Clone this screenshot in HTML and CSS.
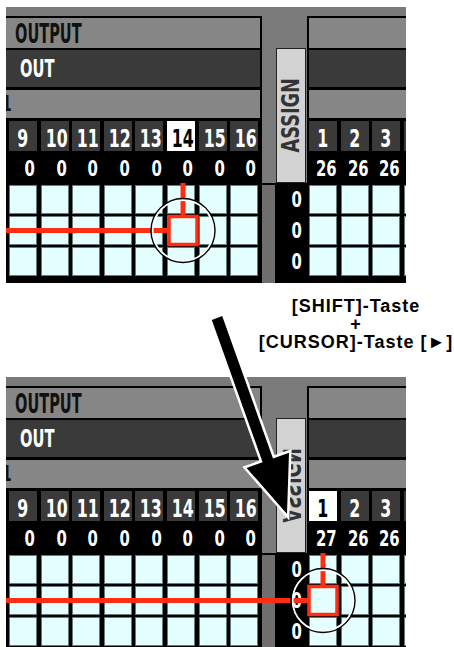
FILE: index.html
```html
<!DOCTYPE html>
<html lang="de">
<head>
    <meta charset="UTF-8">
    <title>Assign Cursor</title>
    <link rel="stylesheet" href="styles.css">
</head>
<body>
<div class="page">

    <!-- before: cursor on OUTPUT 14 -->
    <div class="screen">
        <div class="panel left">
            <div class="band band-title"><span class="title">OUTPUT</span></div>
            <div class="band band-name"><span class="name">OUT</span></div>
            <div class="band band-sub"><span class="cut">1</span></div>
            <div class="keys">
                <span class="key"><span class="n">9</span></span><span class="key"><span class="n">10</span></span>
                <span class="key"><span class="n">11</span></span><span class="key"><span class="n">12</span></span>
                <span class="key"><span class="n">13</span></span><span class="key sel"><span class="n">14</span></span>
                <span class="key"><span class="n">15</span></span><span class="key"><span class="n">16</span></span>
            </div>
            <div class="values">
                <span><span class="n">0</span></span><span><span class="n">0</span></span><span><span class="n">0</span></span><span><span class="n">0</span></span>
                <span><span class="n">0</span></span><span><span class="n">0</span></span><span><span class="n">0</span></span><span><span class="n">0</span></span>
            </div>
            <div class="matrix">
                <div class="row"><span class="cell"></span><span class="cell"></span><span class="cell"></span><span class="cell"></span><span class="cell"></span><span class="cell"></span><span class="cell"></span><span class="cell"></span></div>
                <div class="row"><span class="cell"></span><span class="cell"></span><span class="cell"></span><span class="cell"></span><span class="cell"></span><span class="cell"></span><span class="cell"></span><span class="cell"></span></div>
                <div class="row"><span class="cell"></span><span class="cell"></span><span class="cell"></span><span class="cell"></span><span class="cell"></span><span class="cell"></span><span class="cell"></span><span class="cell"></span></div>
            </div>
        </div>
        <div class="mid">
            <div class="assign"><span class="assign-text">ASSIGN</span></div>
            <div class="mid-low">
                <div class="strip"></div>
                <div class="sums"><span><span class="n">0</span></span><span><span class="n">0</span></span><span><span class="n">0</span></span></div>
            </div>
        </div>
        <div class="panel right">
            <div class="band band-title"></div>
            <div class="band band-name"></div>
            <div class="band band-sub"></div>
            <div class="keys">
                <span class="key"><span class="n">1</span></span><span class="key"><span class="n">2</span></span>
                <span class="key"><span class="n">3</span></span><span class="key"><span class="n">4</span></span>
            </div>
            <div class="values">
                <span><span class="n">26</span></span><span><span class="n">26</span></span><span><span class="n">26</span></span><span><span class="n">26</span></span>
            </div>
            <div class="matrix">
                <div class="row"><span class="cell"></span><span class="cell"></span><span class="cell"></span><span class="cell"></span></div>
                <div class="row"><span class="cell"></span><span class="cell"></span><span class="cell"></span><span class="cell"></span></div>
                <div class="row"><span class="cell"></span><span class="cell"></span><span class="cell"></span><span class="cell"></span></div>
            </div>
        </div>
        <svg class="cursor" viewBox="0 0 400 276">
            <rect x="0" y="221" width="163" height="5" fill="#ff2e12"/>
            <rect x="174.5" y="176" width="5" height="34" fill="#ff2e12"/>
            <rect x="163" y="209.5" width="28" height="28" fill="#e3ffff" stroke="#ff2e12" stroke-width="3.5"/>
            <circle cx="177" cy="223.5" r="30.5" fill="none" stroke="#fff" stroke-width="2"/>
            <circle cx="177" cy="223.5" r="32" fill="none" stroke="#000" stroke-width="1.4"/>
        </svg>
    </div>

    <div class="hint">
        <div>[SHIFT]-Taste</div>
        <div>+</div>
        <div>[CURSOR]-Taste [►]</div>
    </div>

    <!-- after: cursor jumps to ASSIGN 1 -->
    <div class="screen">
        <div class="panel left">
            <div class="band band-title"><span class="title">OUTPUT</span></div>
            <div class="band band-name"><span class="name">OUT</span></div>
            <div class="band band-sub"><span class="cut">1</span></div>
            <div class="keys">
                <span class="key"><span class="n">9</span></span><span class="key"><span class="n">10</span></span>
                <span class="key"><span class="n">11</span></span><span class="key"><span class="n">12</span></span>
                <span class="key"><span class="n">13</span></span><span class="key"><span class="n">14</span></span>
                <span class="key"><span class="n">15</span></span><span class="key"><span class="n">16</span></span>
            </div>
            <div class="values">
                <span><span class="n">0</span></span><span><span class="n">0</span></span><span><span class="n">0</span></span><span><span class="n">0</span></span>
                <span><span class="n">0</span></span><span><span class="n">0</span></span><span><span class="n">0</span></span><span><span class="n">0</span></span>
            </div>
            <div class="matrix">
                <div class="row"><span class="cell"></span><span class="cell"></span><span class="cell"></span><span class="cell"></span><span class="cell"></span><span class="cell"></span><span class="cell"></span><span class="cell"></span></div>
                <div class="row"><span class="cell"></span><span class="cell"></span><span class="cell"></span><span class="cell"></span><span class="cell"></span><span class="cell"></span><span class="cell"></span><span class="cell"></span></div>
                <div class="row"><span class="cell"></span><span class="cell"></span><span class="cell"></span><span class="cell"></span><span class="cell"></span><span class="cell"></span><span class="cell"></span><span class="cell"></span></div>
            </div>
        </div>
        <div class="mid">
            <div class="assign"><span class="assign-text flip">ASSIGN</span></div>
            <div class="mid-low">
                <div class="strip"></div>
                <div class="sums"><span><span class="n">0</span></span><span><span class="n">0</span></span><span><span class="n">0</span></span></div>
            </div>
        </div>
        <div class="panel right">
            <div class="band band-title"></div>
            <div class="band band-name"></div>
            <div class="band band-sub"></div>
            <div class="keys">
                <span class="key sel"><span class="n">1</span></span><span class="key"><span class="n">2</span></span>
                <span class="key"><span class="n">3</span></span><span class="key"><span class="n">4</span></span>
            </div>
            <div class="values">
                <span><span class="n">27</span></span><span><span class="n">26</span></span><span><span class="n">26</span></span><span><span class="n">26</span></span>
            </div>
            <div class="matrix">
                <div class="row"><span class="cell"></span><span class="cell"></span><span class="cell"></span><span class="cell"></span></div>
                <div class="row"><span class="cell"></span><span class="cell"></span><span class="cell"></span><span class="cell"></span></div>
                <div class="row"><span class="cell"></span><span class="cell"></span><span class="cell"></span><span class="cell"></span></div>
            </div>
        </div>
        <svg class="cursor" viewBox="0 0 400 276">
            <rect x="0" y="221" width="303" height="5" fill="#ff2e12"/>
            <rect x="314.5" y="176" width="5" height="34" fill="#ff2e12"/>
            <rect x="303" y="209.5" width="28" height="28" fill="#e3ffff" stroke="#ff2e12" stroke-width="3.5"/>
            <circle cx="317" cy="223.5" r="30.5" fill="none" stroke="#fff" stroke-width="2"/>
            <circle cx="317" cy="223.5" r="32" fill="none" stroke="#000" stroke-width="1.4"/>
        </svg>
    </div>

    <svg class="arrow" viewBox="0 0 454 647">
        <polygon points="211.8,319.9 222.2,316.1 273,458.4 289,452.7 287,514 246.6,467.9 262.6,462.2"
                 fill="#000" stroke="#fff" stroke-width="5" paint-order="stroke"/>
    </svg>
</div>
</body>
</html>
```

FILE: styles.css
```css
body {
    margin: 0;
    background-color: #fff;
    font-family: "Liberation Sans", Arial, sans-serif;
}

.page {
    position: relative;
    width: 454px;
    height: 647px;
    padding-top: 7px;
    box-sizing: border-box;
    overflow: hidden;
}

.screen {
    position: relative;
    display: flex;
    width: 400px;
    height: 276px;
    margin-left: 6px;
    padding-top: 9px;
    box-sizing: border-box;
    background-color: #7a7a7a;
    overflow: hidden;
    font-family: "DejaVu Sans Condensed", "DejaVu Sans", sans-serif;
    font-weight: bold;
}

.panel {
    flex: none;
    height: 267px;
    box-sizing: border-box;
    border-top: 2px solid #000;
    background-color: #000;
    overflow: hidden;
}

.left {
    width: 256px;
    border-right: 2px solid #000;
}

.right {
    width: 99px;
    border-left: 2px solid #000;
}

.band {
    background-color: #868686;
}

.band-title {
    height: 30px;
    border-bottom: 2px solid #000;
}

.band-name {
    height: 37px;
    border-bottom: 3px solid #000;
    background-color: #3a3a3a;
}

.band-sub {
    height: 28px;
}

.title {
    display: inline-block;
    margin-left: 9px;
    font-size: 27px;
    line-height: 31px;
    color: #111;
    transform: scaleX(0.6);
    transform-origin: left;
}

.name {
    display: inline-block;
    margin-left: 14px;
    font-size: 24px;
    line-height: 38px;
    color: #fff;
    transform: scaleX(0.68);
    transform-origin: left;
}

.cut {
    display: inline-block;
    margin-left: -6px;
    font-size: 22px;
    line-height: 28px;
    color: #111;
    transform: scaleX(0.7);
}

.keys {
    display: flex;
    gap: 3.6px;
    height: 33px;
    padding: 3px 0 0 3px;
    box-sizing: border-box;
}

.right .keys,
.right .values,
.right .matrix {
    padding-left: 0;
}

.key {
    flex: none;
    width: 28px;
    height: 30px;
    background-color: #3a3a3a;
    color: #fff;
    font-size: 25px;
    line-height: 35px;
    text-align: center;
    white-space: nowrap;
}

.key .n {
    display: inline-block;
    transform: scaleX(0.7);
}

.key.sel {
    background-color: #fff;
    color: #000;
}

.values {
    display: flex;
    gap: 3.6px;
    height: 32px;
    padding-left: 3px;
}

.values > span {
    flex: none;
    width: 28px;
    padding-right: 2px;
    box-sizing: border-box;
    font-size: 22px;
    line-height: 35px;
    text-align: right;
    white-space: nowrap;
    color: #fff;
}

.values .n,
.sums .n {
    display: inline-block;
    transform: scaleX(0.75);
    transform-origin: right;
}

.matrix {
    display: flex;
    flex-direction: column;
    gap: 2px;
    padding: 2px 0 0 3px;
}

.row {
    display: flex;
    gap: 3.6px;
}

.cell {
    flex: none;
    width: 28px;
    height: 29px;
    box-sizing: border-box;
    border: 1px solid #667a7a;
    background-color: #e3ffff;
}

.mid {
    flex: none;
    display: flex;
    flex-direction: column;
    width: 45px;
    padding-top: 32px;
}

.assign {
    display: flex;
    align-items: center;
    justify-content: center;
    width: 30px;
    height: 135px;
    margin-left: 14px;
    box-sizing: border-box;
    border: 1px solid #222;
    background-color: #d2d2d2;
}

.assign-text {
    writing-mode: vertical-rl;
    transform: rotate(180deg) scaleY(0.82);
    font-size: 24px;
    line-height: 28px;
    color: #333;
}

.assign-text.flip {
    transform: scaleY(-0.82);
}

.mid-low {
    display: flex;
    height: 100px;
}

.strip {
    width: 13px;
    border-top: 2px solid #000;
    border-right: 1px solid #000;
    background-color: #6e6e6e;
}

.sums {
    display: flex;
    flex-direction: column;
    gap: 2px;
    width: 31px;
    padding-top: 2px;
    background-color: #000;
}

.sums > span {
    height: 29px;
    padding-right: 5px;
    font-size: 22px;
    line-height: 29px;
    text-align: right;
    color: #fff;
}

.cursor {
    position: absolute;
    left: 0;
    top: 0;
    width: 400px;
    height: 276px;
}

.hint {
    width: 196px;
    margin: 14px 0 26px 258px;
    font-size: 18px;
    font-weight: bold;
    line-height: 18px;
    letter-spacing: 1px;
    text-align: center;
    white-space: nowrap;
    color: #000;
}

.arrow {
    position: absolute;
    left: 0;
    top: 0;
    width: 454px;
    height: 647px;
}
```
